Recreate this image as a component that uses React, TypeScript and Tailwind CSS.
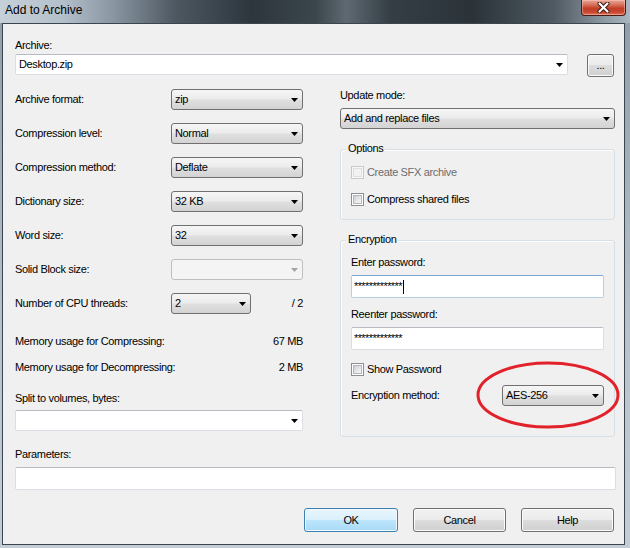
import React from "react";

const COMBO_BG =
  "bg-[linear-gradient(to_bottom,#f6f6f6_0%,#ececec_45%,#dfdfdf_55%,#d3d3d3_100%)]";
const BTN_BG =
  "bg-[linear-gradient(to_bottom,#f2f2f2_0%,#ebebeb_50%,#dddddd_50%,#cfcfcf_100%)]";
const OK_BG =
  "bg-[linear-gradient(to_bottom,#eaf6fd_0%,#d9f0fc_50%,#bee6fd_50%,#a7d9f5_100%)]";

function Arrow({ color = "#000" }: { color?: string }) {
  return (
    <svg width="7" height="4" viewBox="0 0 7 4" className="shrink-0">
      <path d="M0 0H7L3.5 4Z" fill={color} />
    </svg>
  );
}

function Combo({ w, value, disabled }: { w: string; value?: string; disabled?: boolean }) {
  return (
    <div
      className={`${w} h-[21px] shrink-0 rounded-[3px] border flex items-center justify-between pl-[3px] pr-[4px] ${
        disabled ? "border-[#bcc0c3] bg-[#f4f4f4]" : "border-[#707070] " + COMBO_BG
      }`}
    >
      <span className="leading-[13px] whitespace-nowrap">{value}</span>
      <Arrow color={disabled ? "#a3a3a3" : "#000"} />
    </div>
  );
}

function EditCombo({ w, value }: { w: string; value?: string }) {
  return (
    <div
      className={`${w} h-[21px] shrink-0 rounded-[2px] bg-white border border-[#dadde3] border-t-[#b8bbc2] flex items-center justify-between pl-[3px] pr-[4px]`}
    >
      <span className="leading-[13px] whitespace-nowrap">{value}</span>
      <Arrow />
    </div>
  );
}

function Btn({
  w,
  h = "h-[24px]",
  ok,
  children,
  extra = "",
}: {
  w: string;
  h?: string;
  ok?: boolean;
  children: React.ReactNode;
  extra?: string;
}) {
  return (
    <div
      className={`${w} ${h} ${extra} shrink-0 rounded-[3px] border flex items-center justify-center leading-[13px] ${
        ok
          ? "border-[#3c7fb1] shadow-[inset_0_0_0_1px_#f2faff] " + OK_BG
          : "border-[#707070] shadow-[inset_0_0_0_1px_#fbfbfb] " + BTN_BG
      }`}
    >
      {children}
    </div>
  );
}

function Check({ disabled }: { disabled?: boolean }) {
  return (
    <div
      className={`w-[13px] h-[13px] shrink-0 border p-[1px] ${
        disabled ? "border-[#c9c9c9] bg-[#f7f7f7]" : "border-[#8e8f8f] bg-white"
      }`}
    >
      <div
        className={`w-full h-full ${
          disabled
            ? "bg-[#f2f2f2] border border-[#e0e0e0]"
            : "border border-[#b4b8bd] bg-[linear-gradient(135deg,#c9cdd3_0%,#e9eaec_60%,#f8f8f8_100%)]"
        }`}
      />
    </div>
  );
}

function CheckRow({ label, disabled, extra = "" }: { label: string; disabled?: boolean; extra?: string }) {
  return (
    <div className={`flex items-center gap-[3px] h-[13px] ${extra}`}>
      <Check disabled={disabled} />
      <span className={`leading-[13px] whitespace-nowrap ${disabled ? "text-[#6d6d6d]" : "text-black"}`}>
        {label}
      </span>
    </div>
  );
}

function Group({
  title,
  extra,
  children,
}: {
  title: string;
  extra: string;
  children: React.ReactNode;
}) {
  return (
    <div
      className={`relative w-[275px] rounded-[3px] border border-[#d5dfe5] shadow-[inset_1px_1px_0_#ffffff] ${extra}`}
    >
      <span className="absolute left-[5px] top-[-8px] px-[2px] bg-[#f0f0f0] leading-[13px] whitespace-nowrap">
        {title}
      </span>
      {children}
    </div>
  );
}

function Row({ label, children }: { label: string; children: React.ReactNode }) {
  return (
    <div className="flex items-center h-[21px]">
      <div className="w-[156px] shrink-0 leading-[13px] whitespace-nowrap">{label}</div>
      {children}
    </div>
  );
}

export default function App() {
  return (
    <div className="relative w-[630px] h-[548px] overflow-hidden bg-[linear-gradient(to_bottom,#8f9ca7_0%,#b7c2cc_60%,#c4cdd5_100%)] font-[family-name:'Liberation_Sans',Arial,sans-serif] text-[11px] tracking-[-0.35px] text-black">
      {/* Title bar */}
      <div className="h-[23px] flex justify-between bg-[linear-gradient(90deg,#c6d0d9_0%,#b3bfca_10%,#8995a1_18%,#4c5760_28%,#2d363d_40%,#3b454c_50%,#5e6971_55%,#353e45_62%,#2b3339_75%,#4f5a62_88%,#8e9aa4_96%,#aab6c0_100%)]">
        <div className="pl-[5px] pt-[3px] text-[12px] tracking-normal leading-[15px] text-black whitespace-nowrap">
          Add to Archive
        </div>
        <div className="mr-[4px] w-[45px] h-[16px] rounded-b-[4px] border border-t-0 border-[#4a1c16] bg-[linear-gradient(to_bottom,#e8a898_0%,#d66c57_35%,#c23e27_55%,#c8452f_80%,#e2765f_100%)] shadow-[inset_0_0_0_1px_rgba(255,205,195,0.45)] flex items-start justify-center pt-[2px]">
          <svg width="13" height="11" viewBox="0 0 13 11">
            <path d="M2.5 1.5L10.5 9.5M10.5 1.5L2.5 9.5" stroke="#3a1510" strokeWidth="4" strokeLinecap="round" />
            <path d="M2.5 1.5L10.5 9.5M10.5 1.5L2.5 9.5" stroke="#ffffff" strokeWidth="2.2" strokeLinecap="round" />
          </svg>
        </div>
      </div>

      {/* Client area */}
      <div className="ml-[2px] w-[623px] h-[522px] border border-[#3a454e] bg-[#f0f0f0] pl-[12px] pt-[15px] flex flex-col">
        <div className="h-[13px] leading-[13px]">Archive:</div>
        <div className="mt-[2px] flex items-start gap-[19px]">
          <EditCombo w="w-[553px]" value="Desktop.zip" />
          <Btn w="w-[27px]" h="h-[23px]">
            ...
          </Btn>
        </div>

        <div className="mt-[12px] flex items-start gap-[37px]">
          {/* Left column */}
          <div className="w-[288px] shrink-0 flex flex-col">
            <div className="flex flex-col gap-[13px]">
              <Row label="Archive format:">
                <Combo w="w-[132px]" value="zip" />
              </Row>
              <Row label="Compression level:">
                <Combo w="w-[132px]" value="Normal" />
              </Row>
              <Row label="Compression method:">
                <Combo w="w-[132px]" value="Deflate" />
              </Row>
              <Row label="Dictionary size:">
                <Combo w="w-[132px]" value="32 KB" />
              </Row>
              <Row label="Word size:">
                <Combo w="w-[132px]" value="32" />
              </Row>
              <Row label="Solid Block size:">
                <Combo w="w-[132px]" disabled />
              </Row>
              <Row label="Number of CPU threads:">
                <Combo w="w-[80px]" value="2" />
                <div className="flex-1 text-right leading-[13px]">/ 2</div>
              </Row>
            </div>
            <div className="mt-[21px] h-[13px] leading-[13px] flex justify-between">
              <span>Memory usage for Compressing:</span>
              <span>67 MB</span>
            </div>
            <div className="mt-[13px] h-[13px] leading-[13px] flex justify-between">
              <span>Memory usage for Decompressing:</span>
              <span>2 MB</span>
            </div>
            <div className="mt-[18px] h-[13px] leading-[13px]">Split to volumes, bytes:</div>
            <div className="mt-[5px]">
              <EditCombo w="w-[288px]" />
            </div>
          </div>

          {/* Right column */}
          <div className="w-[275px] shrink-0 flex flex-col">
            <div className="h-[13px] leading-[13px]">Update mode:</div>
            <div className="mt-[6px]">
              <Combo w="w-[275px]" value="Add and replace files" />
            </div>
            <Group title="Options" extra="mt-[20px] h-[71px] pt-[16px] pl-[10px]">
              <CheckRow label="Create SFX archive" disabled />
              <CheckRow label="Compress shared files" extra="mt-[14px]" />
            </Group>
            <Group title="Encryption" extra="mt-[20px] h-[197px] pt-[15px] px-[10px] flex flex-col">
              <div className="h-[13px] leading-[13px]">Enter password:</div>
              <div className="mt-[6px] h-[23px] w-full bg-white border border-[#b5cfe7] border-t-[#7aa6d2] rounded-[2px] flex items-center pl-[2px]">
                <span className="leading-[13px] tracking-[-0.6px]">*************</span>
                <span className="ml-[1px] w-[1px] h-[14px] bg-black" />
              </div>
              <div className="mt-[10px] h-[13px] leading-[13px]">Reenter password:</div>
              <div className="mt-[6px] h-[23px] w-full bg-white border border-[#dadde3] border-t-[#b8bbc2] rounded-[2px] flex items-center pl-[2px]">
                <span className="leading-[13px] tracking-[-0.6px]">*************</span>
              </div>
              <CheckRow label="Show Password" extra="mt-[13px]" />
              <div className="mt-[9px] h-[21px] flex items-center justify-between">
                <span className="leading-[13px]">Encryption method:</span>
                <Combo w="w-[102px]" value="AES-256" />
              </div>
            </Group>
          </div>
        </div>

        <div className="mt-[11px] h-[13px] leading-[13px]">Parameters:</div>
        <div className="mt-[6px] w-[601px] h-[23px] bg-white border border-[#dadde3] border-t-[#b8bbc2] rounded-[2px]" />

        <div className="mt-[18px] flex">
          <Btn w="w-[94px]" ok extra="ml-[289px]">
            OK
          </Btn>
          <Btn w="w-[93px]" extra="ml-[15px]">
            Cancel
          </Btn>
          <Btn w="w-[93px]" extra="ml-[15px]">
            Help
          </Btn>
        </div>
      </div>

      {/* Red annotation ellipse */}
      <svg className="absolute left-[475px] top-[360px]" width="146" height="70" viewBox="0 0 146 70">
        <ellipse cx="73" cy="35" rx="70" ry="32" fill="none" stroke="#e2222a" strokeWidth="3" />
      </svg>
    </div>
  );
}
